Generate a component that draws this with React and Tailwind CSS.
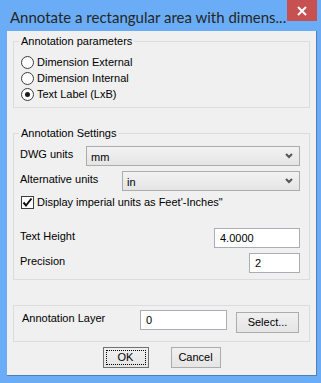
import React, { useState } from 'react';

const font = { fontFamily: '"Liberation Sans", Arial, sans-serif' };

function Chevron() {
  return (
    <svg width="8" height="6" viewBox="0 0 8 6" className="shrink-0">
      <polyline points="1,1 4,4 7,1" fill="none" stroke="#555" strokeWidth="2" />
    </svg>
  );
}

function Combo({ value, className }) {
  return (
    <div
      className={`h-[20px] flex items-center justify-between pl-[4px] pr-[6px] border border-[#acacac] bg-gradient-to-b from-[#f2f2f2] to-[#e5e5e5] text-[11px] text-black ${className}`}
    >
      <span className="pt-[2px]">{value}</span>
      <Chevron />
    </div>
  );
}

function Field({ value, className }) {
  return (
    <div className={`h-[20px] flex items-center px-[5px] bg-white border border-[#abadb3] text-[11px] text-black ${className}`}>
      {value}
    </div>
  );
}

function Radio({ checked, label, onClick }) {
  return (
    <div className="h-[16px] flex items-center gap-[3px] cursor-default" onClick={onClick}>
      <span className="w-[13px] h-[13px] rounded-full border border-[#3c3c3c] bg-white flex items-center justify-center shrink-0">
        {checked && <span className="w-[5px] h-[5px] rounded-full bg-[#1a1a1a]" />}
      </span>
      <span className="text-[11px] text-black">{label}</span>
    </div>
  );
}

export default function App() {
  const [mode, setMode] = useState(2);

  return (
    <div style={font} className="w-[321px] h-[383px] bg-[#6aadf6] flex flex-col overflow-hidden">
      <div className="h-[31px] flex items-start shrink-0">
        <div
          style={{ fontFamily: 'Lato, "Noto Sans", sans-serif' }}
          className="flex-1 pl-[10px] pt-[7px] text-[15px] leading-[20px] text-[#262626] whitespace-nowrap overflow-hidden"
        >
          Annotate a rectangular area with dimens...
        </div>
        <div className="w-[30px] h-[21px] mr-[4px] bg-[#c75050] flex items-center justify-center shrink-0">
          <svg width="10" height="10" viewBox="0 0 10 10">
            <path d="M1 1 L9 9 M9 1 L1 9" stroke="white" strokeWidth="2" />
          </svg>
        </div>
      </div>

      <div className="ml-[7px] w-[310px] h-[345px] bg-[#f0f0f0] border-r border-b border-[#4f7fb8] flex flex-col px-[6px] pt-[4px] text-[11px] text-black">
        <fieldset className="border border-[#dcdcdc] p-0">
          <legend className="ml-[5px] px-[2px] leading-[13px]">Annotation parameters</legend>
          <div className="pl-[7px] pt-[6px] pb-[5px]">
            <Radio checked={mode === 0} label="Dimension External" onClick={() => setMode(0)} />
            <Radio checked={mode === 1} label="Dimension Internal" onClick={() => setMode(1)} />
            <Radio checked={mode === 2} label="Text Label (LxB)" onClick={() => setMode(2)} />
          </div>
        </fieldset>

        <fieldset className="mt-[19px] border border-[#dcdcdc] p-0">
          <legend className="ml-[5px] px-[2px] leading-[13px]">Annotation Settings</legend>
          <div className="pl-[6px] pr-[9px] pt-[6px] pb-[6px]">
            <div className="flex items-start">
              <span className="leading-[13px] pt-[2px] w-[66px]">DWG units</span>
              <Combo value="mm" className="flex-1" />
            </div>
            <div className="flex items-start mt-[5px]">
              <span className="leading-[13px] pt-[2px] w-[102px]">Alternative units</span>
              <Combo value="in" className="flex-1" />
            </div>
            <div className="flex items-center gap-[3px] mt-[5px] pl-[1px] h-[13px]">
              <span className="w-[13px] h-[13px] border border-[#3c3c3c] bg-white flex items-center justify-center shrink-0">
                <svg width="11" height="11" viewBox="0 0 11 11">
                  <polyline points="1.5,5.5 4,8.5 9.5,1.5" fill="none" stroke="#111" strokeWidth="2" />
                </svg>
              </span>
              <span>Display imperial units as Feet'-Inches"</span>
            </div>
            <div className="flex items-start justify-between mt-[19px]">
              <span className="leading-[13px] pt-[2px]">Text Height</span>
              <Field value="4.0000" className="w-[86px]" />
            </div>
            <div className="flex items-start justify-between mt-[5px]">
              <span className="leading-[13px] pt-[2px]">Precision</span>
              <Field value="2" className="w-[51px]" />
            </div>
          </div>
        </fieldset>

        <div className="mt-[25px] border border-[#dcdcdc] pl-[8px] pt-[4px] pb-[8px] flex items-start">
          <span className="leading-[13px] pt-[2px] w-[118px]">Annotation Layer</span>
          <Field value="0" className="w-[87px]" />
          <button className="ml-[9px] mt-[2px] w-[63px] h-[21px] border border-[#acacac] bg-gradient-to-b from-[#f0f0f0] to-[#e5e5e5] text-[11px] text-black">
            Select...
          </button>
        </div>

        <div className="flex justify-center gap-[22px] mt-[5px]">
          <button className="w-[46px] h-[21px] border border-[#707070] bg-gradient-to-b from-[#f0f0f0] to-[#e5e5e5] text-[11px] text-black outline outline-1 outline-dotted outline-black outline-offset-[-4px]">
            OK
          </button>
          <button className="w-[50px] h-[21px] border border-[#acacac] bg-gradient-to-b from-[#f0f0f0] to-[#e5e5e5] text-[11px] text-black">
            Cancel
          </button>
        </div>
      </div>
    </div>
  );
}
